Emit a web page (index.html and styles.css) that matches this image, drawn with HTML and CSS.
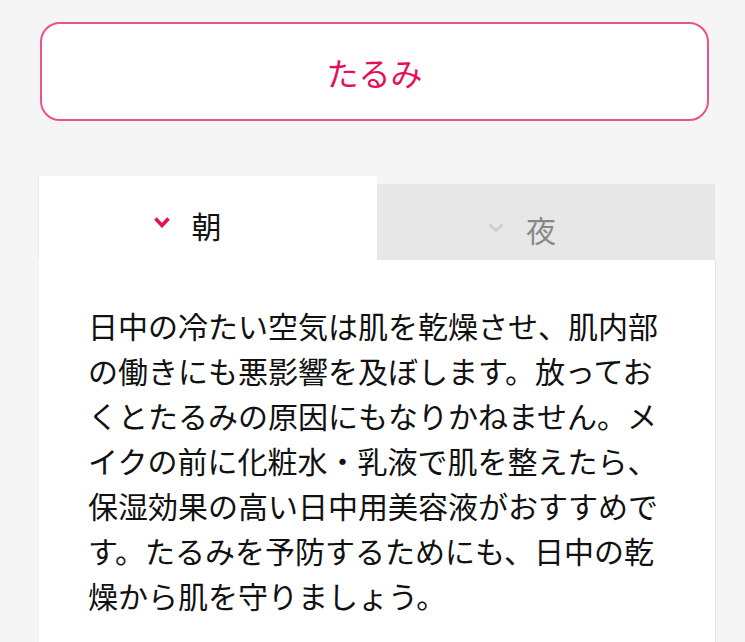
FILE: index.html
```html
<!DOCTYPE html>
<html lang="ja">
<head>
<meta charset="utf-8">
<title>たるみ</title>
<link rel="stylesheet" href="styles.css">
</head>
<body>
<div class="page">
  <button class="concern-btn" type="button">たるみ</button>
  <div class="tabs">
    <div class="tab tab--active">
      <svg class="chev" viewBox="0 0 16 11" width="16" height="11"><polyline points="1.5,1.5 8,8.5 14.5,1.5" fill="none" stroke="currentColor" stroke-width="3.6" stroke-linejoin="miter"/></svg>
      <span class="tab-label">朝</span>
    </div>
    <div class="tab tab--inactive">
      <svg class="chev" viewBox="0 0 16 10" width="16" height="10"><polyline points="1.5,1.5 8,7.5 14.5,1.5" fill="none" stroke="currentColor" stroke-width="3" stroke-linejoin="miter"/></svg>
      <span class="tab-label">夜</span>
    </div>
  </div>
  <div class="panel">
    <p class="panel-text">日中の冷たい空気は肌を乾燥させ、肌内部の働きにも悪影響を及ぼします。放っておくとたるみの原因にもなりかねません。メイクの前に化粧水・乳液で肌を整えたら、保湿効果の高い日中用美容液がおすすめです。たるみを予防するためにも、日中の乾燥から肌を守りましょう。</p>
  </div>
</div>
</body>
</html>
```

FILE: styles.css
```css
html, body {
  margin: 0;
  padding: 0;
  background: #f5f5f5;
  height: 100%;
  overflow: hidden;
}

body {
  font-family: "Noto Sans CJK JP", "Noto Sans", sans-serif;
  color: #111;
}

.page {
  padding-top: 22px;
}

.concern-btn {
  display: block;
  box-sizing: border-box;
  margin: 0 0 0 40px;
  width: 669px;
  height: 99px;
  padding: 0;
  border: 2px solid #e9538b;
  border-radius: 20px;
  background: #fff;
  color: #e4105c;
  font-family: "Noto Sans CJK JP", sans-serif;
  font-size: 32px;
  line-height: 1;
  cursor: pointer;
}

.tabs {
  display: flex;
  align-items: flex-end;
  margin: 55px 0 0 39px;
  width: 676px;
}

.tab {
  box-sizing: border-box;
  flex: none;
  width: 338px;
  display: flex;
  align-items: center;
  justify-content: center;
  gap: 22px;
  font-size: 30px;
  line-height: 1;
}

.tab--active {
  height: 84px;
  padding: 13px 41px 0 0;
  background: #fff;
  border-radius: 3px 3px 0 0;
  color: #111;
  box-shadow: -1px 0 1px rgba(0, 0, 0, 0.04);
}

.tab--active .chev {
  color: #e4105c;
  margin-top: -4px;
}

.tab--inactive {
  height: 76px;
  padding: 14px 48px 0 0;
  background: #e7e7e7;
  color: #888;
}

.tab--inactive .chev {
  color: #cfcfcf;
  margin-top: -3px;
}

.chev {
  display: block;
  flex: none;
}

.tab-label {
  display: block;
}

.panel {
  box-sizing: border-box;
  margin-left: 39px;
  width: 676px;
  height: 382px;
  background: #fff;
  padding: 43px 49px 0;
  box-shadow: 1px 0 1px rgba(0, 0, 0, 0.06);
}

.panel-text {
  margin: 0;
  font-size: 30px;
  line-height: 45px;
  color: #111;
  line-break: anywhere;
}
```
